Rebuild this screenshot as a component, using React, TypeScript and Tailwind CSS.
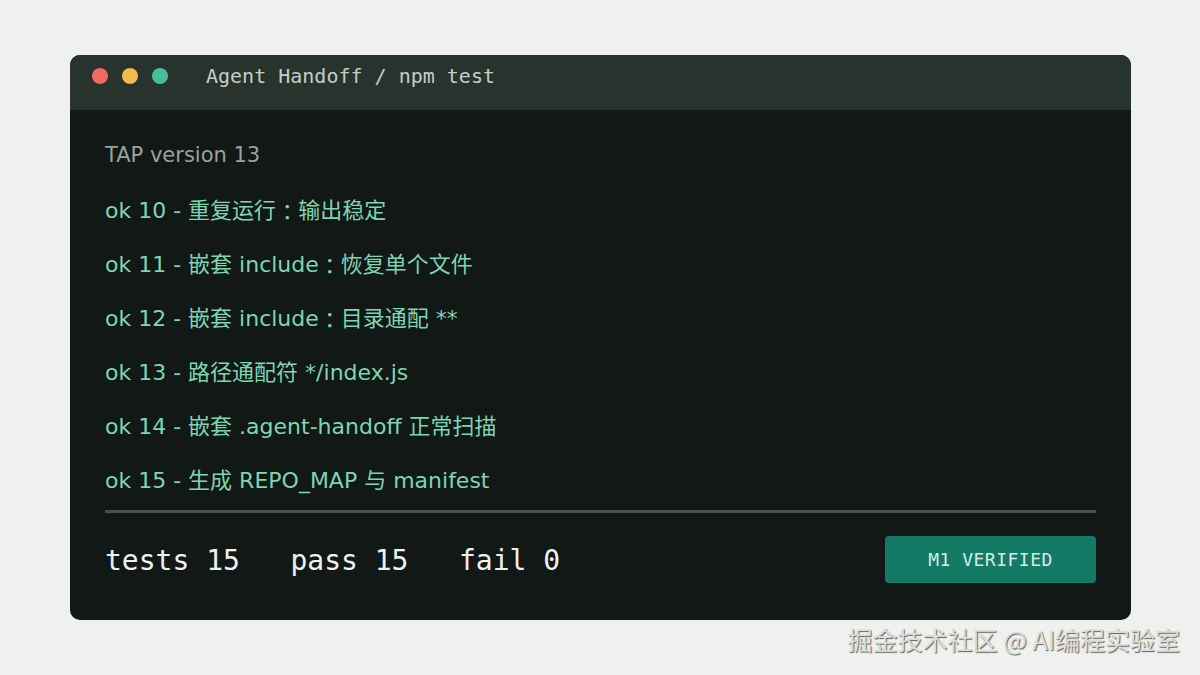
import React from "react";

type Line = { pre: string; post?: string };

const lines: Line[] = [
  { pre: "ok 10 - 重复运行", post: "输出稳定" },
  { pre: "ok 11 - 嵌套 include", post: "恢复单个文件" },
  { pre: "ok 12 - 嵌套 include", post: "目录通配 **" },
  { pre: "ok 13 - 路径通配符 */index.js" },
  { pre: "ok 14 - 嵌套 .agent-handoff 正常扫描" },
  { pre: "ok 15 - 生成 REPO_MAP 与 manifest" },
];

const mono = '"DejaVu Sans Mono", "Liberation Mono", monospace';

export default function App() {
  return (
    <div className="relative w-[1200px] h-[675px] bg-[#eff1ee] overflow-hidden">
      <div className="absolute left-[70px] top-[55px] w-[1061px] h-[565px] rounded-[10px] overflow-hidden bg-[#111815] flex flex-col">
        <div className="h-[55px] bg-[#29332e] flex items-center pl-[22px] pb-[13px]">
          <div className="flex gap-[14px]">
            <div className="w-[16px] h-[16px] rounded-full bg-[#ee6b5f]" />
            <div className="w-[16px] h-[16px] rounded-full bg-[#f2b94c]" />
            <div className="w-[16px] h-[16px] rounded-full bg-[#48bf9c]" />
          </div>
          <div
            className="ml-[38px] text-[20px] text-[#c4cdc7] whitespace-pre"
            style={{ fontFamily: mono }}
          >
            Agent Handoff / npm test
          </div>
        </div>
        <div className="flex-1 px-[35px] pt-[19px] flex flex-col">
          <div
            className="flex flex-col text-[22px]"
            style={{ fontFamily: '"DejaVu Sans", "Noto Sans CJK SC", sans-serif' }}
          >
            <div className="h-[54px] flex items-center text-[#9aa29d] text-[21px]">TAP version 13</div>
            {lines.map((l) => (
              <div key={l.pre} className="h-[54px] flex items-center text-[#7fd4b3] whitespace-pre">
                {l.pre}
                {l.post !== undefined && (
                  <>
                    <span style={{ fontFamily: '"Noto Sans CJK TC", sans-serif' }}>：</span>
                    {l.post}
                  </>
                )}
              </div>
            ))}
          </div>
          <div className="mt-[3px] h-[3px] bg-[#4a504c]" />
          <div className="flex items-center justify-between pt-[23px]">
            <div
              className="text-[28px] text-[#eef1ef] whitespace-pre pt-[2px]"
              style={{ fontFamily: mono }}
            >
              {"tests 15   pass 15   fail 0"}
            </div>
            <div
              className="w-[211px] h-[47px] rounded-[4px] bg-[#137a66] flex items-center justify-center text-[18px] text-[#d3ebe2] tracking-[0.5px]"
              style={{ fontFamily: mono }}
            >
              M1 VERIFIED
            </div>
          </div>
        </div>
      </div>
      <div
        className="absolute right-[20px] top-[621px] text-[25px] text-[#dcdedc] whitespace-pre"
        style={{
          fontFamily: '"Noto Sans CJK SC", sans-serif',
          textShadow: "1px 1px 1px #5f615f",
        }}
      >
        掘金技术社区 @ AI编程实验室
      </div>
    </div>
  );
}
